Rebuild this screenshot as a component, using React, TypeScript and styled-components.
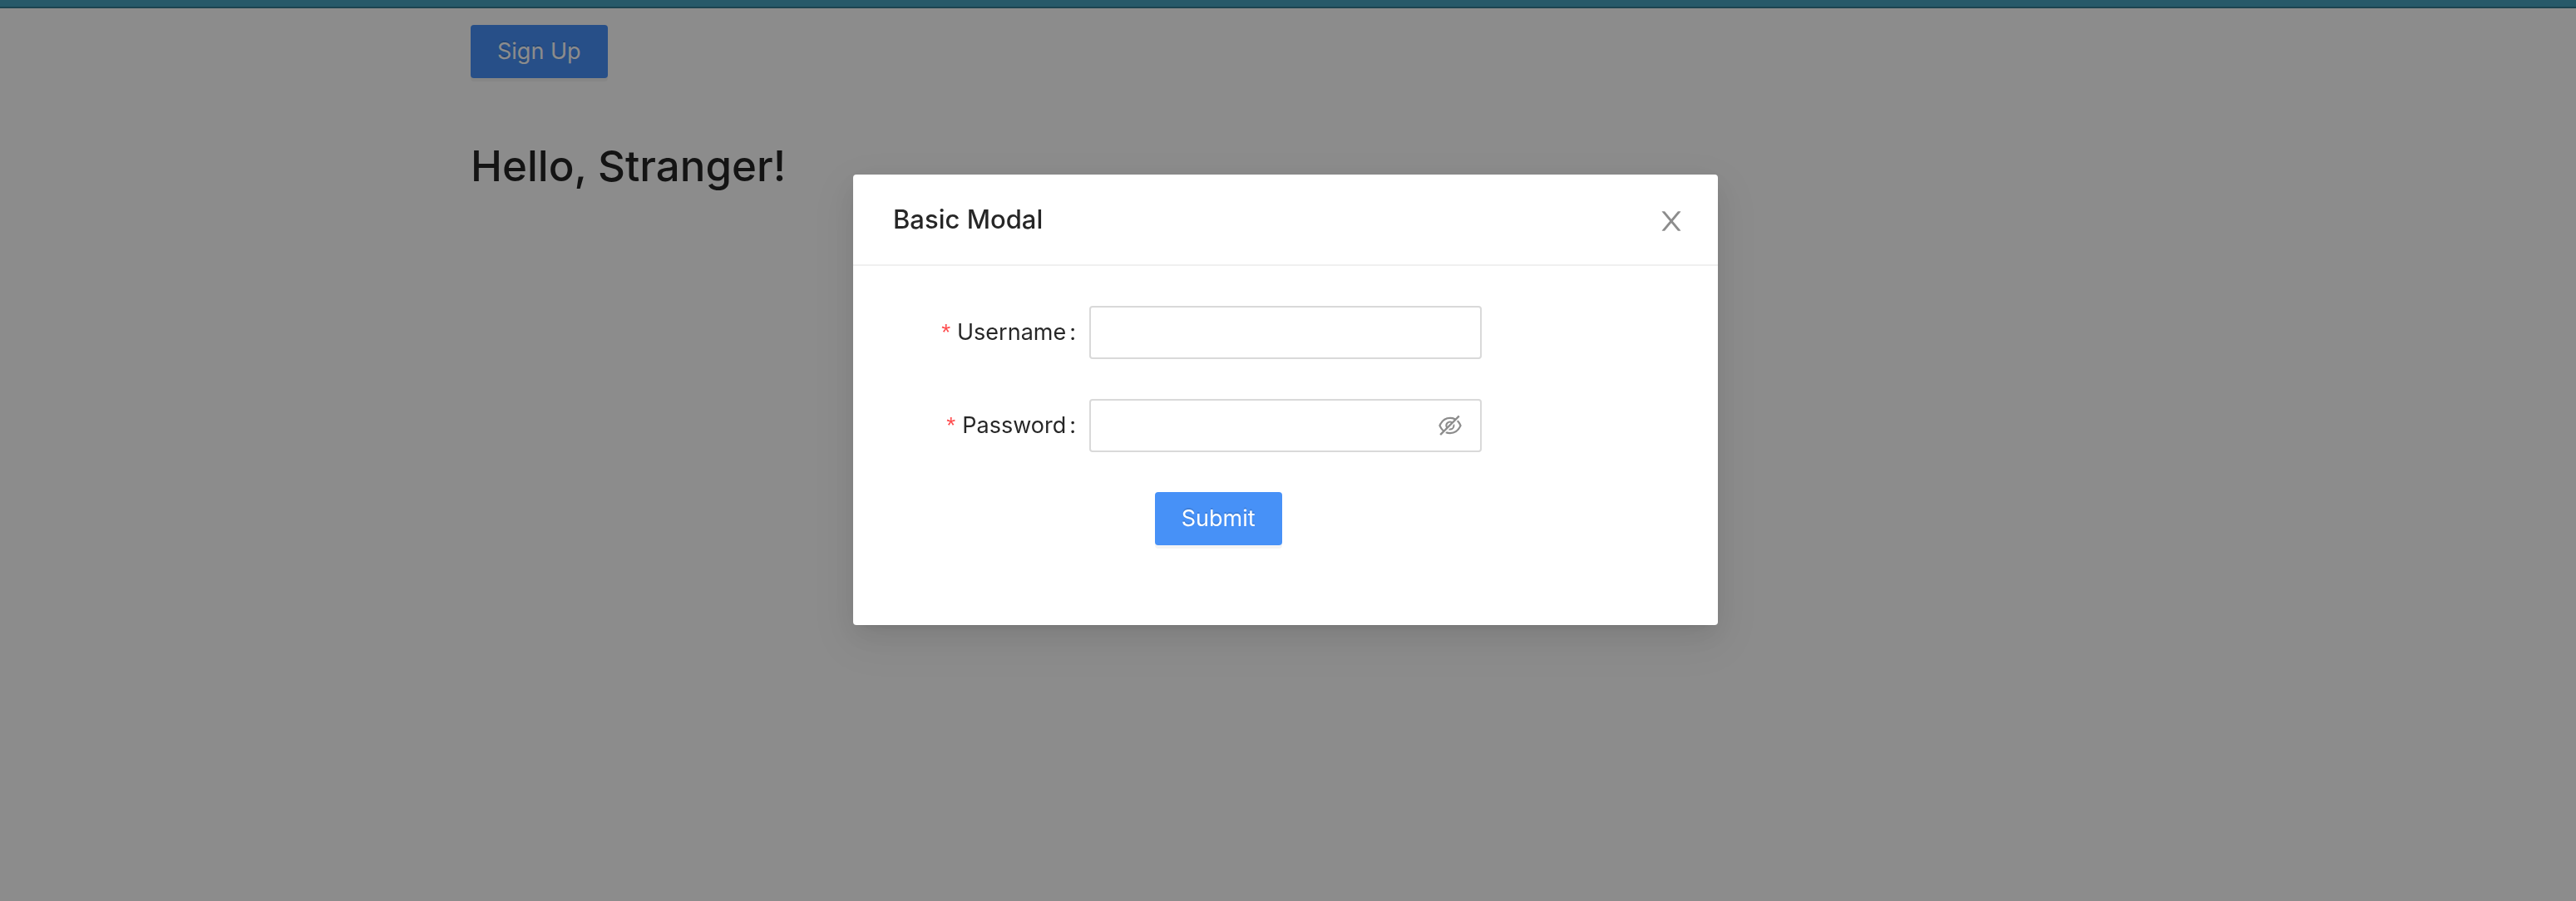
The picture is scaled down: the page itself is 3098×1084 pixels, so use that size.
import React from "react";
import styled, { createGlobalStyle } from "styled-components";
import { AiOutlineEyeInvisible } from "react-icons/ai";

const GlobalStyle = createGlobalStyle`
  *, *::before, *::after {
    box-sizing: border-box;
  }

  body {
    margin: 0;
    background: #fff;
    color: rgba(0, 0, 0, 0.85);
    font-family: Inter, "Liberation Sans", sans-serif;
    font-size: 27px;
    line-height: 44px;
  }
`;

const TopBar = styled.header`
  height: 10px;
  background: #47a2bf;
  border-bottom: 2px solid #347b92;
`;

const Container = styled.main`
  max-width: 1966px;
  margin: 0 auto;
  padding-top: 20px;
`;

const PrimaryButton = styled.button`
  display: block;
  height: 64px;
  padding: 0 32px;
  border: 0;
  border-radius: 4px;
  background: #4791f7;
  color: #fff;
  font: inherit;
  text-shadow: 0 -2px 0 rgba(0, 0, 0, 0.12);
  box-shadow: 0 4px 0 rgba(0, 0, 0, 0.045);
  cursor: pointer;
`;

const Greeting = styled.h1`
  margin: 68px 0 0;
  font-size: 51px;
  font-weight: 500;
  line-height: 76px;
`;

const Overlay = styled.div`
  position: fixed;
  inset: 0;
  display: flex;
  justify-content: center;
  align-items: flex-start;
  padding: 210px 6px 48px 0;
  overflow: auto;
  background: rgba(0, 0, 0, 0.45);
`;

const Dialog = styled.section`
  width: 100%;
  max-width: 1040px;
  border-radius: 4px;
  background: #fff;
  box-shadow:
    0 6px 12px -8px rgba(0, 0, 0, 0.12),
    0 12px 32px 0 rgba(0, 0, 0, 0.08),
    0 18px 56px 16px rgba(0, 0, 0, 0.05);
`;

const DialogHeader = styled.div`
  display: flex;
  justify-content: space-between;
  align-items: center;
  padding-left: 48px;
  border-bottom: 2px solid #f0f0f0;
`;

const DialogTitle = styled.h2`
  margin: 0;
  font-size: 31px;
  font-weight: 500;
  line-height: 44px;
`;

const CloseButton = styled.button`
  display: flex;
  justify-content: center;
  align-items: center;
  width: 112px;
  height: 108px;
  padding: 4px 0 0;
  border: 0;
  background: transparent;
  color: rgba(0, 0, 0, 0.45);
  cursor: pointer;
`;

const Form = styled.form`
  display: grid;
  gap: 48px;
  padding: 48px 48px 96px;
`;

const FormRow = styled.div`
  display: grid;
  grid-template-columns: 25% 50%;
`;

const Label = styled.label`
  display: flex;
  justify-content: flex-end;
  align-items: center;
  padding-right: 16px;

  &::after {
    content: ":";
    margin-left: 4px;
  }
`;

const Required = styled.span`
  margin-right: 8px;
  color: #ff4d4f;
  font-family: "Liberation Sans", sans-serif;
  font-size: 28px;
`;

const Field = styled.div`
  display: flex;
  align-items: center;
  height: 64px;
  padding: 0 20px;
  border: 2px solid #d9d9d9;
  border-radius: 4px;
`;

const TextInput = styled.input`
  flex: 1;
  min-width: 0;
  padding: 0;
  border: 0;
  outline: 0;
  background: transparent;
  color: inherit;
  font: inherit;
`;

const RevealButton = styled.button`
  display: flex;
  padding: 0;
  border: 0;
  background: transparent;
  color: rgba(0, 0, 0, 0.45);
  font-size: 32px;
  cursor: pointer;
`;

const SubmitRow = styled.div`
  display: flex;
  padding-left: calc(100% / 3);
`;

function CloseIcon() {
  return (
    <svg width="32" height="32" viewBox="64 64 896 896" fill="currentColor" aria-hidden="true">
      <path d="M563.8 512l262.5-312.9c4.4-5.2.7-13.1-6.1-13.1h-79.8c-4.7 0-9.2 2.1-12.3 5.7L511.6 449.8 295.1 191.7c-3-3.6-7.5-5.7-12.3-5.7H203c-6.8 0-10.5 7.9-6.1 13.1L459.4 512 196.9 824.9A7.95 7.95 0 0 0 203 838h79.8c4.7 0 9.2-2.1 12.3-5.7l216.5-258.1 216.5 258.1c3 3.6 7.5 5.7 12.3 5.7h79.8c6.8 0 10.5-7.9 6.1-13.1L563.8 512z" />
    </svg>
  );
}

export default function App() {
  return (
    <>
      <GlobalStyle />
      <TopBar />
      <Container>
        <PrimaryButton type="button">Sign Up</PrimaryButton>
        <Greeting>Hello, Stranger!</Greeting>
      </Container>
      <Overlay>
        <Dialog role="dialog" aria-modal="true" aria-labelledby="dialog-title">
          <DialogHeader>
            <DialogTitle id="dialog-title">Basic Modal</DialogTitle>
            <CloseButton type="button" aria-label="Close">
              <CloseIcon />
            </CloseButton>
          </DialogHeader>
          <Form onSubmit={(event) => event.preventDefault()}>
            <FormRow>
              <Label htmlFor="username">
                <Required>*</Required>Username
              </Label>
              <Field>
                <TextInput id="username" type="text" required />
              </Field>
            </FormRow>
            <FormRow>
              <Label htmlFor="password">
                <Required>*</Required>Password
              </Label>
              <Field>
                <TextInput id="password" type="password" required />
                <RevealButton type="button" aria-label="Show password">
                  <AiOutlineEyeInvisible />
                </RevealButton>
              </Field>
            </FormRow>
            <SubmitRow>
              <PrimaryButton type="submit">Submit</PrimaryButton>
            </SubmitRow>
          </Form>
        </Dialog>
      </Overlay>
    </>
  );
}
